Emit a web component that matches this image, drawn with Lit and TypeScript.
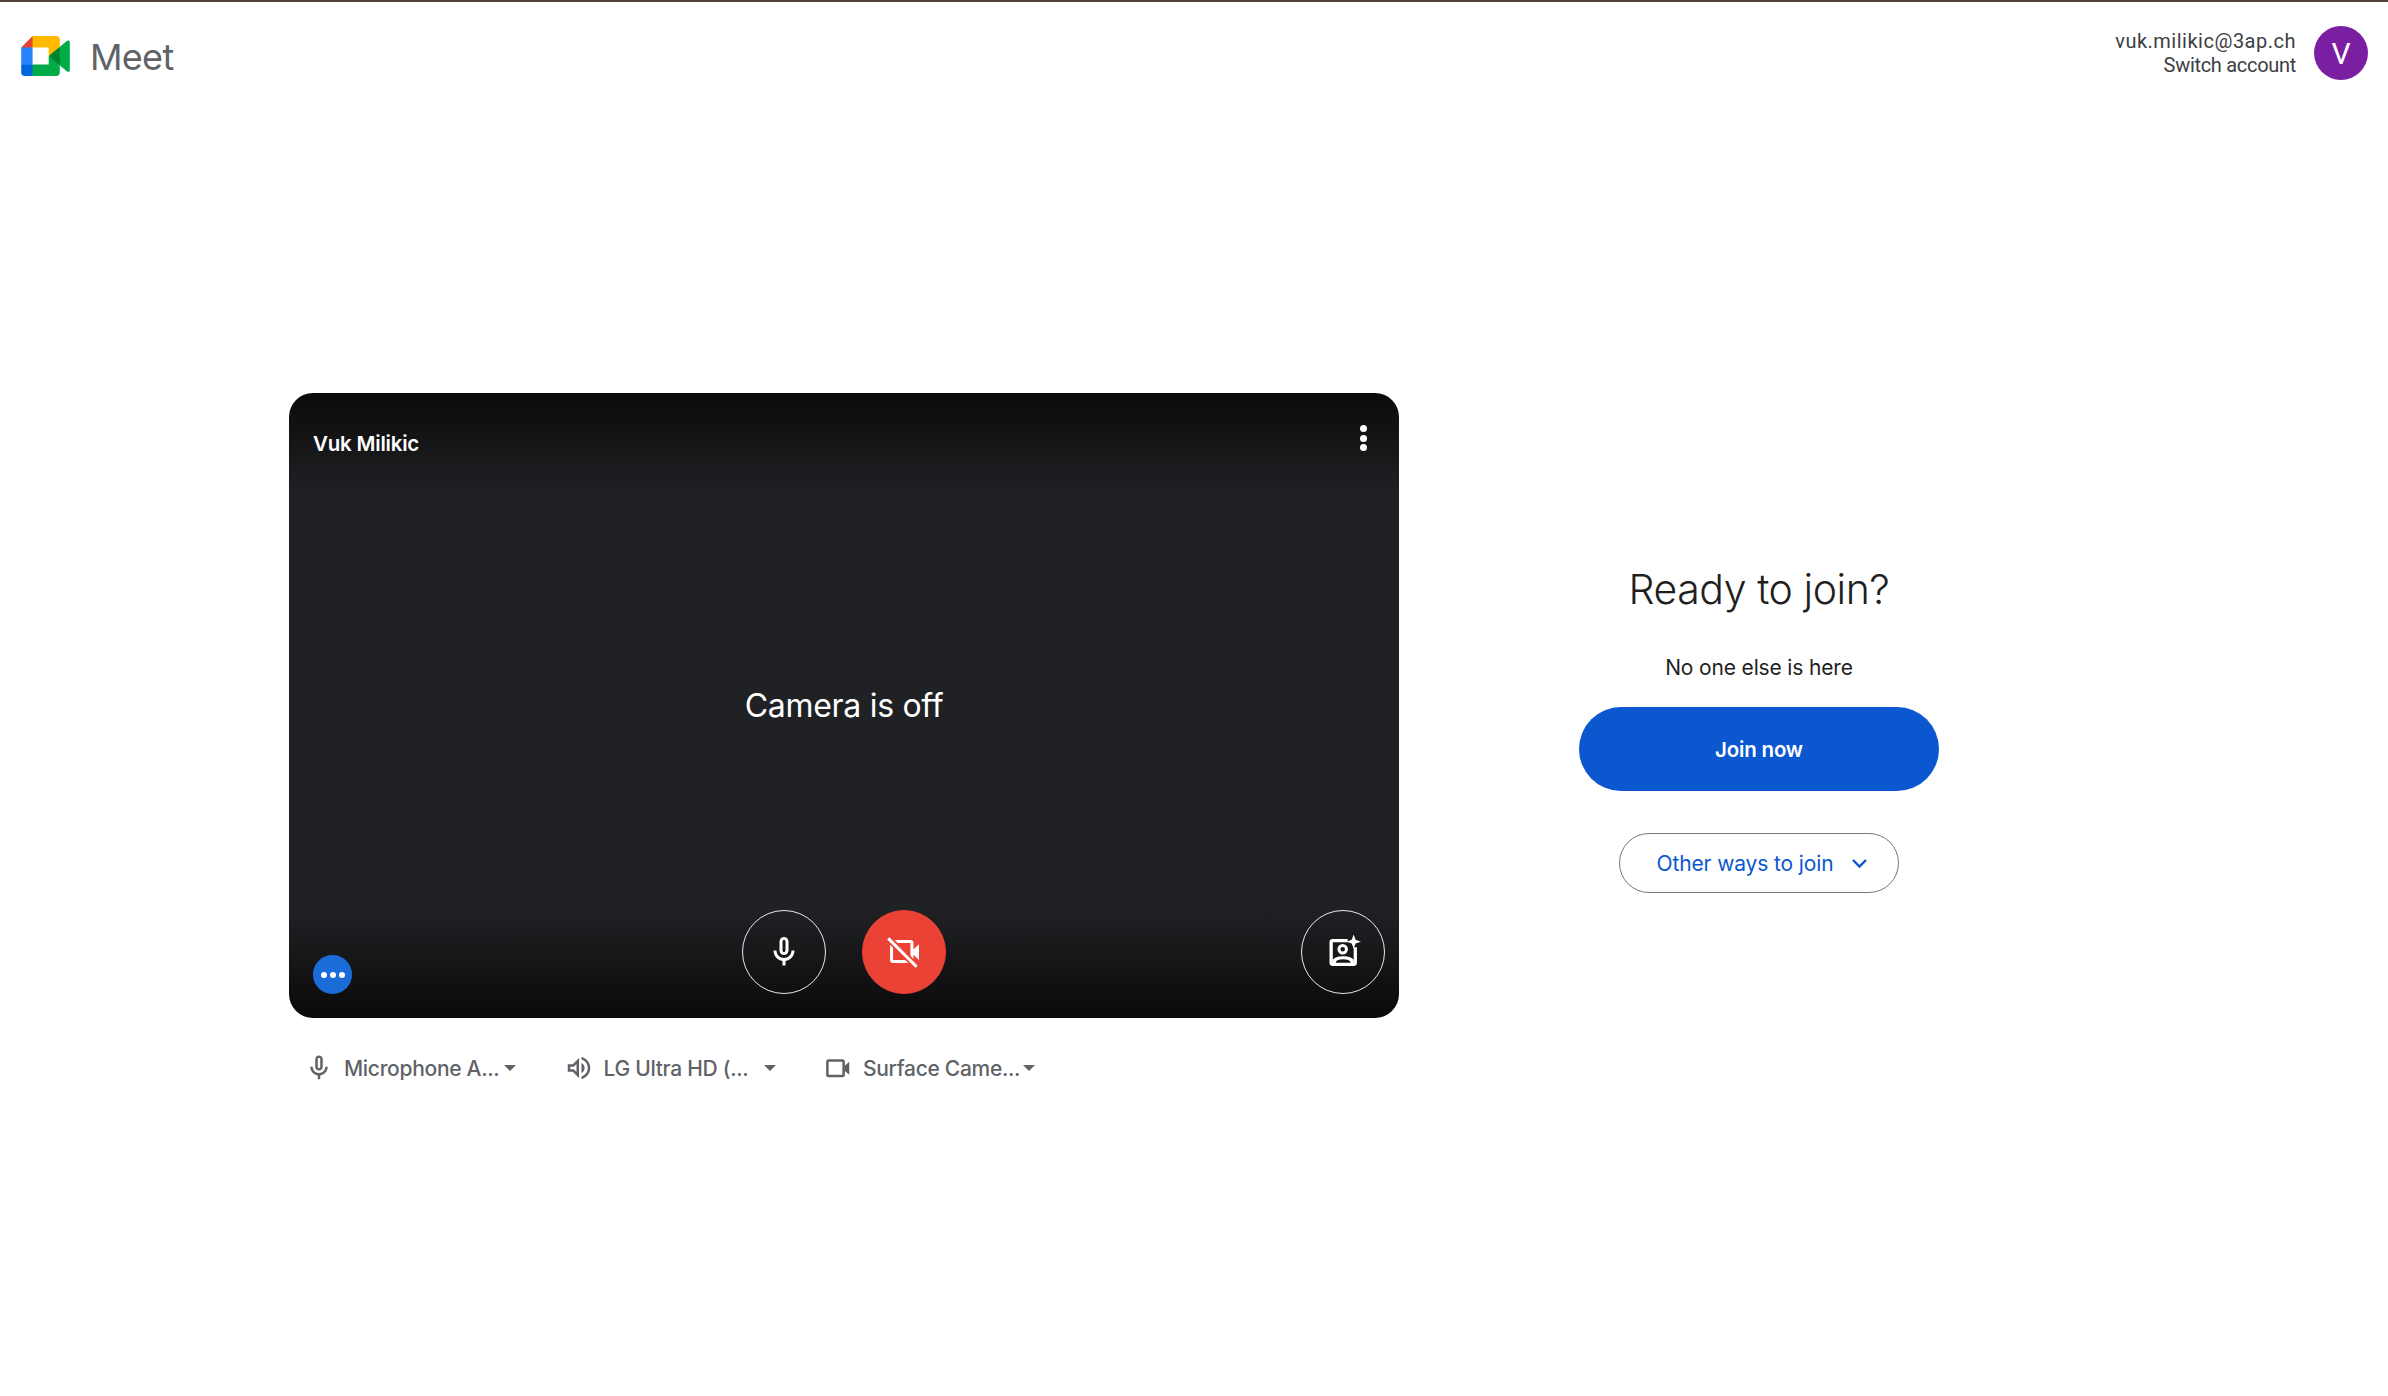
import { LitElement, html, css, svg } from "lit";
import { customElement } from "lit/decorators.js";

const MIC = svg`<path d="M12 14c1.66 0 3-1.34 3-3V5c0-1.66-1.34-3-3-3S9 3.34 9 5v6c0 1.66 1.34 3 3 3zm-1-9c0-.55.45-1 1-1s1 .45 1 1v6c0 .55-.45 1-1 1s-1-.45-1-1V5z"/><path d="M17 11c0 2.76-2.24 5-5 5s-5-2.24-5-5H5c0 3.53 2.61 6.43 6 6.92V21h2v-3.08c3.39-.49 6-3.39 6-6.92h-2z"/>`;
const CAM_OFF = svg`
  <rect x="3.700" y="5" width="13.600" height="13.300" rx="1" fill="none" stroke="#fff" stroke-width="2"/>
  <path d="M17.400 11L22 6.900v10.400L17.400 13z"/>
  <path d="M2 3.400l18.900 18.900" stroke="#ea4335" stroke-width="4.400"/>
  <path d="M1.500 2.900l18.900 18.900" stroke="#fff" stroke-width="2"/>`;
const SPEAKER = svg`<path d="M3 9v6h4l5 5V4L7 9H3zm7-.17v6.34L7.83 13H5v-2h2.83L10 8.83zM16.5 12c0-1.77-1.02-3.29-2.5-4.03v8.05c1.48-.73 2.5-2.25 2.5-4.02zM14 3.23v2.06c2.89.86 5 3.54 5 6.71s-2.11 5.85-5 6.71v2.06c4.01-.91 7-4.49 7-8.77 0-4.28-2.99-7.86-7-8.77z"/>`;
const CAMERA = svg`
  <rect x="3.500" y="6" width="13" height="12.400" rx="1" fill="none" stroke="#5f6368" stroke-width="2"/>
  <path d="M17 10.500l4-3.500v10.400l-4-3.500z"/>`;
const EFFECTS = svg`
  <path d="M14 4.400H5.100c-.6 0-1 .4-1 1v13.800c0 .6.4 1 1 1h14.100c.6 0 1-.4 1-1V10" fill="none" stroke="#fff" stroke-width="2.200" stroke-linecap="square"/>
  <circle cx="11.800" cy="10.200" r="2.500" fill="none" stroke="#fff" stroke-width="2"/>
  <path d="M5 19.600v-1.800c0-1.800 3.300-3 7.100-3s7.100 1.200 7.100 3v1.800z" fill="#fff"/>
  <path d="M7.300 19.200v-.8c.9-1 2.800-1.500 4.800-1.500s3.900.5 4.800 1.500v.8z" fill="#161718"/>
  <path d="M19.100.3l1.300 3.500 3.500 1.300-3.500 1.300-1.300 3.500-1.300-3.500-3.500-1.300 3.500-1.300z"/>`;
const LOGO = svg`
  <path fill="#00832d" d="M49.5 36l8.53 9.75 11.47 7.33 2-17.02-2-16.64-11.69 6.44z"/>
  <path fill="#0066da" d="M0 51.5V66c0 3.315 2.685 6 6 6h14.5l3-10.96-3-9.54-9.95-3z"/>
  <path fill="#e94235" d="M20.5 0L0 20.5l10.55 3 9.95-3 2.95-9.41z"/>
  <path fill="#2684fc" d="M20.5 20.5H0v31h20.5z"/>
  <path fill="#00ac47" d="M82.6 8.68L69.5 19.42v33.66l13.16 10.79c1.97 1.54 4.85.135 4.85-2.37V11c0-2.535-2.945-3.925-4.91-2.32zM49.5 36v15.5h-29V72h43c3.315 0 6-2.685 6-6V53.08z"/>
  <path fill="#ffba00" d="M63.5 0h-43v20.5h29V36l20-16.57V6c0-3.315-2.685-6-6-6z"/>`;

const DEVICES = [
  { icon: MIC, label: "Microphone A..." },
  { icon: SPEAKER, label: "LG Ultra HD (..." },
  { icon: CAMERA, label: "Surface Came..." },
];

@customElement("app-root")
export class AppRoot extends LitElement {
  static styles = css`
    :host {
      display: block;
      height: 1396px;
      box-sizing: border-box;
      border-top: 2px solid #4e403b;
      background: #fff;
      font-family: Inter, "Noto Sans", sans-serif;
      overflow: hidden;
    }

    svg {
      display: block;
      flex: none;
    }

    .header {
      display: flex;
      justify-content: space-between;
      height: 391px;
      box-sizing: border-box;
      padding: 24px 20px 0 21px;
    }
    .brand {
      display: flex;
      align-items: center;
      gap: 20px;
      height: 40px;
      margin-top: 10px;
    }
    .brand svg {
      width: 49px;
      height: 40px;
    }
    .brand span {
      font-size: 36px;
      line-height: 42px;
      padding-top: 2px;
      color: #5f6368;
      letter-spacing: -0.7px;
    }
    .account {
      display: flex;
      align-items: center;
      gap: 18px;
      height: 54px;
    }
    .account-text {
      font-family: Roboto, sans-serif;
      font-size: 20px;
      line-height: 24px;
      color: #3c4043;
      text-align: right;
    }
    .email {
      letter-spacing: 0.5px;
    }
    .switch {
      letter-spacing: -0.3px;
    }
    .avatar {
      width: 54px;
      height: 54px;
      border-radius: 50%;
      background: #7b1fa2;
      color: #fff;
      font-family: Roboto, sans-serif;
      font-size: 30px;
      display: flex;
      align-items: center;
      justify-content: center;
    }

    .main {
      display: flex;
      gap: 180px;
      padding-left: 289px;
    }
    .left {
      width: 1110px;
    }

    .video {
      height: 625px;
      border-radius: 24px;
      overflow: hidden;
      color: #fff;
      background: linear-gradient(to bottom, #0a0a0b 0, #202124 100px, #202124 515px, #0a0a0b 100%);
      display: grid;
      grid-template-rows: 108px 1fr 108px;
    }
    .video-top {
      display: flex;
      justify-content: space-between;
      padding: 27px 32px 0 24px;
    }
    .name {
      font-size: 20.5px;
      line-height: 48px;
      font-weight: 600;
      letter-spacing: -0.2px;
    }
    .more {
      display: flex;
      flex-direction: column;
      gap: 2.5px;
      padding-top: 5px;
    }
    .more i {
      width: 7px;
      height: 7px;
      border-radius: 50%;
      background: #fff;
    }
    .camera-msg {
      display: flex;
      align-items: center;
      justify-content: center;
      font-size: 32px;
      letter-spacing: -0.3px;
    }
    .video-bottom {
      display: grid;
      grid-template-columns: 1fr auto 1fr;
      align-items: start;
      padding: 0 14px;
    }
    .dots {
      align-self: end;
      margin: 0 0 24px 10px;
      width: 39px;
      height: 39px;
      border-radius: 50%;
      background: #1a6dd8;
      display: flex;
      align-items: center;
      justify-content: center;
      gap: 3px;
    }
    .dots i {
      width: 6px;
      height: 6px;
      border-radius: 50%;
      background: #fff;
    }
    .controls {
      display: flex;
      gap: 36px;
    }
    .round {
      width: 84px;
      height: 84px;
      box-sizing: border-box;
      border-radius: 50%;
      border: 1.5px solid #e8eaed;
      display: flex;
      align-items: center;
      justify-content: center;
      fill: #fff;
    }
    .round svg {
      width: 36px;
      height: 36px;
    }
    .round.off {
      background: #ea4335;
      border-color: #ea4335;
    }
    .round.effects {
      justify-self: end;
    }

    .devices {
      display: flex;
      padding: 32px 0 0 15px;
    }
    .device {
      display: flex;
      align-items: center;
      width: 259.5px;
      height: 36px;
      color: #5f6368;
      font-size: 21px;
      font-weight: 450;
      fill: #5f6368;
    }
    .device svg.icon {
      width: 30px;
      height: 30px;
      margin-right: 10px;
    }
    .device span {
      width: 155px;
      white-space: nowrap;
      letter-spacing: -0.3px;
    }
    .caret {
      width: 0;
      height: 0;
      margin-left: 5px;
      border-left: 6px solid transparent;
      border-right: 6px solid transparent;
      border-top: 6px solid #5f6368;
    }

    .join {
      width: 360px;
      display: flex;
      flex-direction: column;
      align-items: center;
      padding-top: 168px;
      color: #1f1f1f;
    }
    .join h1 {
      margin: 0;
      font-size: 41px;
      line-height: 56px;
      font-weight: 300;
      letter-spacing: -0.45px;
      white-space: nowrap;
    }
    .join p {
      margin: 36px 0 0;
      font-size: 21px;
      line-height: 30px;
      letter-spacing: -0.15px;
    }
    .join-now {
      margin-top: 24px;
      width: 360px;
      height: 84px;
      border: none;
      border-radius: 42px;
      background: #0b57d0;
      color: #fff;
      font: 600 20.5px Inter, sans-serif;
      letter-spacing: -0.2px;
    }
    .other {
      margin-top: 42px;
      width: 280px;
      height: 60px;
      box-sizing: border-box;
      border: 1.5px solid #747775;
      border-radius: 30px;
      background: #fff;
      color: #0b57d0;
      font: 400 21px Inter, sans-serif;
      letter-spacing: -0.12px;
      display: flex;
      align-items: center;
      justify-content: center;
      gap: 17px;
      padding: 0 0 0 6px;
    }
    .other svg {
      width: 17px;
      height: 11px;
    }
  `;

  render() {
    return html`
      <div class="header">
        <div class="brand">
          <svg viewBox="0 0 87.5 72">${LOGO}</svg>
          <span>Meet</span>
        </div>
        <div class="account">
          <div class="account-text">
            <div class="email">vuk.milikic@3ap.ch</div>
            <div class="switch">Switch account</div>
          </div>
          <div class="avatar">V</div>
        </div>
      </div>
      <div class="main">
        <div class="left">
          <div class="video">
            <div class="video-top">
              <div class="name">Vuk Milikic</div>
              <div class="more"><i></i><i></i><i></i></div>
            </div>
            <div class="camera-msg">Camera is off</div>
            <div class="video-bottom">
              <div class="dots"><i></i><i></i><i></i></div>
              <div class="controls">
                <div class="round"><svg viewBox="0 0 24 24">${MIC}</svg></div>
                <div class="round off"><svg viewBox="0 0 24 24">${CAM_OFF}</svg></div>
              </div>
              <div class="round effects"><svg viewBox="0 0 24 24">${EFFECTS}</svg></div>
            </div>
          </div>
          <div class="devices">
            ${DEVICES.map(
              (d) => html`
                <div class="device">
                  <svg class="icon" viewBox="0 0 24 24">${d.icon}</svg>
                  <span>${d.label}</span>
                  <div class="caret"></div>
                </div>
              `
            )}
          </div>
        </div>
        <div class="join">
          <h1>Ready to join?</h1>
          <p>No one else is here</p>
          <button class="join-now">Join now</button>
          <button class="other">
            Other ways to join
            <svg viewBox="0 0 17 11"><path d="M2 2l6.5 6.5L15 2" fill="none" stroke="#0b57d0" stroke-width="2.4"/></svg>
          </button>
        </div>
      </div>
    `;
  }
}
